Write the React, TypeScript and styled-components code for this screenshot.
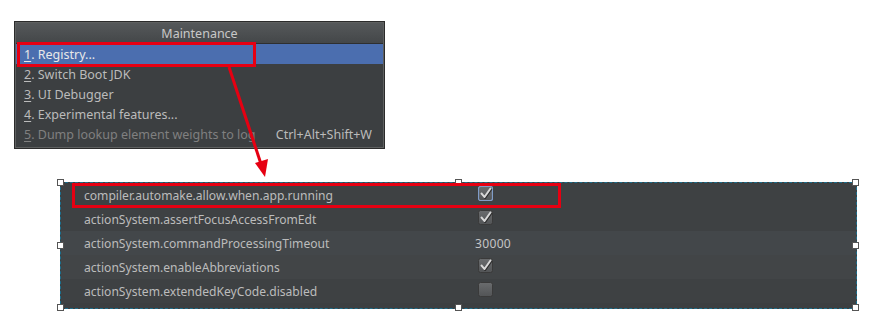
import React from "react";
import styled, { createGlobalStyle } from "styled-components";

const Global = createGlobalStyle`
  html, body { margin: 0; padding: 0; background: #ffffff; }
  body { font-family: "Noto Sans", "Open Sans", sans-serif; }
`;

const Page = styled.div`
  position: relative;
  width: 883px;
  height: 334px;
  overflow: hidden;
  background: #ffffff;
  display: flex;
  flex-direction: column;
  align-items: flex-start;
  padding-top: 21px;
  box-sizing: border-box;
`;

const Menu = styled.div`
  margin-left: 14px;
  width: 371px;
  background: #3c3f41;
  border: 1px solid #2b2b2b;
  box-shadow: inset 0 0 0 1px #5e6060;
  display: flex;
  flex-direction: column;
  padding-bottom: 4px;
  box-sizing: border-box;
  font-size: 12.5px;
`;

const MenuHeader = styled.div`
  height: 20px;
  display: flex;
  align-items: center;
  justify-content: center;
  color: #c8c8c8;
  background: linear-gradient(#55585a, #444749);
  border-bottom: 1px solid #2e2f30;
  margin: 1px 1px 0 1px;
`;

const Item = styled.div<{ $active?: boolean; $disabled?: boolean }>`
  height: 20px;
  display: flex;
  align-items: center;
  justify-content: space-between;
  padding: 0 11px 0 8px;
  margin: 0 1px;
  background: ${(p) => (p.$active ? "#4b6eaf" : "transparent")};
  color: ${(p) => (p.$active ? "#e8e8e8" : p.$disabled ? "#808080" : "#bbbbbb")};
  white-space: nowrap;
`;

const Mnemonic = styled.span`
  text-decoration: underline;
  text-underline-offset: 2px;
`;

const Shortcut = styled.span`
  color: #bbbbbb;
`;

const Panel = styled.div`
  position: relative;
  margin-top: 33px;
  margin-left: 60px;
  width: 797px;
  height: 127px;
  border: 1px dashed #1c6e8c;
  box-sizing: border-box;
  background: #3c3f41;
`;

const Rows = styled.div`
  height: 100%;
  overflow: hidden;
  display: flex;
  flex-direction: column;
`;

const Row = styled.div<{ $shade: number }>`
  height: 24px;
  flex: 0 0 24px;
  display: grid;
  grid-template-columns: 391px 1fr;
  align-items: center;
  padding-left: 23px;
  background: ${(p) => ["#3e4143", "#3e4143", "#43474a", "#424547", "#3e4143", "#3f4244"][p.$shade]};
  color: #bcbcbc;
  font-size: 12.1px;
  white-space: nowrap;
`;

const Value = styled.span`
  color: #c4c4c4;
  letter-spacing: 0.3px;
`;

const BoxWrap = styled.span`
  display: inline-flex;
  margin-left: 3px;
`;

const Handle = styled.span<{ $x: string; $y: string }>`
  position: absolute;
  left: ${(p) => p.$x};
  top: ${(p) => p.$y};
  width: 5px;
  height: 5px;
  margin: -4px 0 0 -4px;
  background: #ffffff;
  border: 1px solid #555;
`;

const Highlight = styled.div<{ $l: number; $t: number; $w: number; $h: number }>`
  position: absolute;
  left: ${(p) => p.$l}px;
  top: ${(p) => p.$t}px;
  width: ${(p) => p.$w}px;
  height: ${(p) => p.$h}px;
  border: 3px solid #e60012;
  box-sizing: border-box;
  pointer-events: none;
`;

const Overlay = styled.svg`
  position: absolute;
  left: 0;
  top: 0;
  pointer-events: none;
`;

function CheckBox({ checked, focused }: { checked: boolean; focused?: boolean }) {
  return (
    <svg width="15" height="15" viewBox="0 0 15 15">
      <defs>
        <linearGradient id="cbg" x1="0" y1="0" x2="0" y2="1">
          <stop offset="0" stopColor="#6a6c6e" />
          <stop offset="1" stopColor="#525456" />
        </linearGradient>
      </defs>
      <rect
        x="0.5"
        y="0.5"
        width="14"
        height="14"
        rx="2"
        fill="url(#cbg)"
        stroke={focused ? "#7f9cc8" : "#3a3a3a"}
        strokeWidth={focused ? 1.2 : 1}
      />
      {checked && (
        <>
          <path d="M3.5 7.5 L6.5 11 L12.5 2.5" fill="none" stroke="#2a2a2a" strokeWidth="2.2" strokeLinecap="round" strokeLinejoin="round" transform="translate(0.6,0.8)" />
          <path d="M3.5 7.5 L6.5 11 L12.5 2.5" fill="none" stroke="#d8d8d8" strokeWidth="2" strokeLinecap="round" strokeLinejoin="round" />
        </>
      )}
    </svg>
  );
}

const menuItems = [
  { n: "1", label: ". Registry...", active: true },
  { n: "2", label: ". Switch Boot JDK" },
  { n: "3", label: ". UI Debugger" },
  { n: "4", label: ". Experimental features..." },
  { n: "5", label: ". Dump lookup element weights to log", disabled: true, shortcut: "Ctrl+Alt+Shift+W" },
];

type Reg = { key: string; value: boolean | string };
const registry: Reg[] = [
  { key: "compiler.automake.allow.when.app.running", value: true },
  { key: "actionSystem.assertFocusAccessFromEdt", value: true },
  { key: "actionSystem.commandProcessingTimeout", value: "30000" },
  { key: "actionSystem.enableAbbreviations", value: true },
  { key: "actionSystem.extendedKeyCode.disabled", value: false },
];

export default function App() {
  return (
    <Page>
      <Global />
      <Menu>
        <MenuHeader>Maintenance</MenuHeader>
        {menuItems.map((m) => (
          <Item key={m.n} $active={m.active} $disabled={m.disabled}>
            <span>
              <Mnemonic>{m.n}</Mnemonic>
              {m.label}
            </span>
            {m.shortcut && <Shortcut>{m.shortcut}</Shortcut>}
          </Item>
        ))}
      </Menu>
      <Panel>
        <Rows>
          {registry.map((r, i) => (
            <Row key={r.key} $shade={i}>
              <span>{r.key}</span>
              <span>
                {typeof r.value === "string" ? (
                  <Value>{r.value}</Value>
                ) : (
                  <BoxWrap>
                    <CheckBox checked={r.value} focused={i === 0} />
                  </BoxWrap>
                )}
              </span>
            </Row>
          ))}
        </Rows>
        <Handle $x="0" $y="0" />
        <Handle $x="50%" $y="0" />
        <Handle $x="100%" $y="0" />
        <Handle $x="0" $y="50%" />
        <Handle $x="100%" $y="50%" />
        <Handle $x="0" $y="100%" />
        <Handle $x="50%" $y="100%" />
        <Handle $x="100%" $y="100%" />
      </Panel>
      <Highlight $l={17} $t={42} $w={239} $h={25} />
      <Highlight $l={72} $t={183} $w={489} $h={25} />
      <Overlay width="883" height="334" viewBox="0 0 883 334">
        <line x1="229" y1="67" x2="261" y2="164" stroke="#e60012" strokeWidth="3" />
        <polygon points="265,177 255,163 268,159" fill="#e60012" />
      </Overlay>
    </Page>
  );
}
